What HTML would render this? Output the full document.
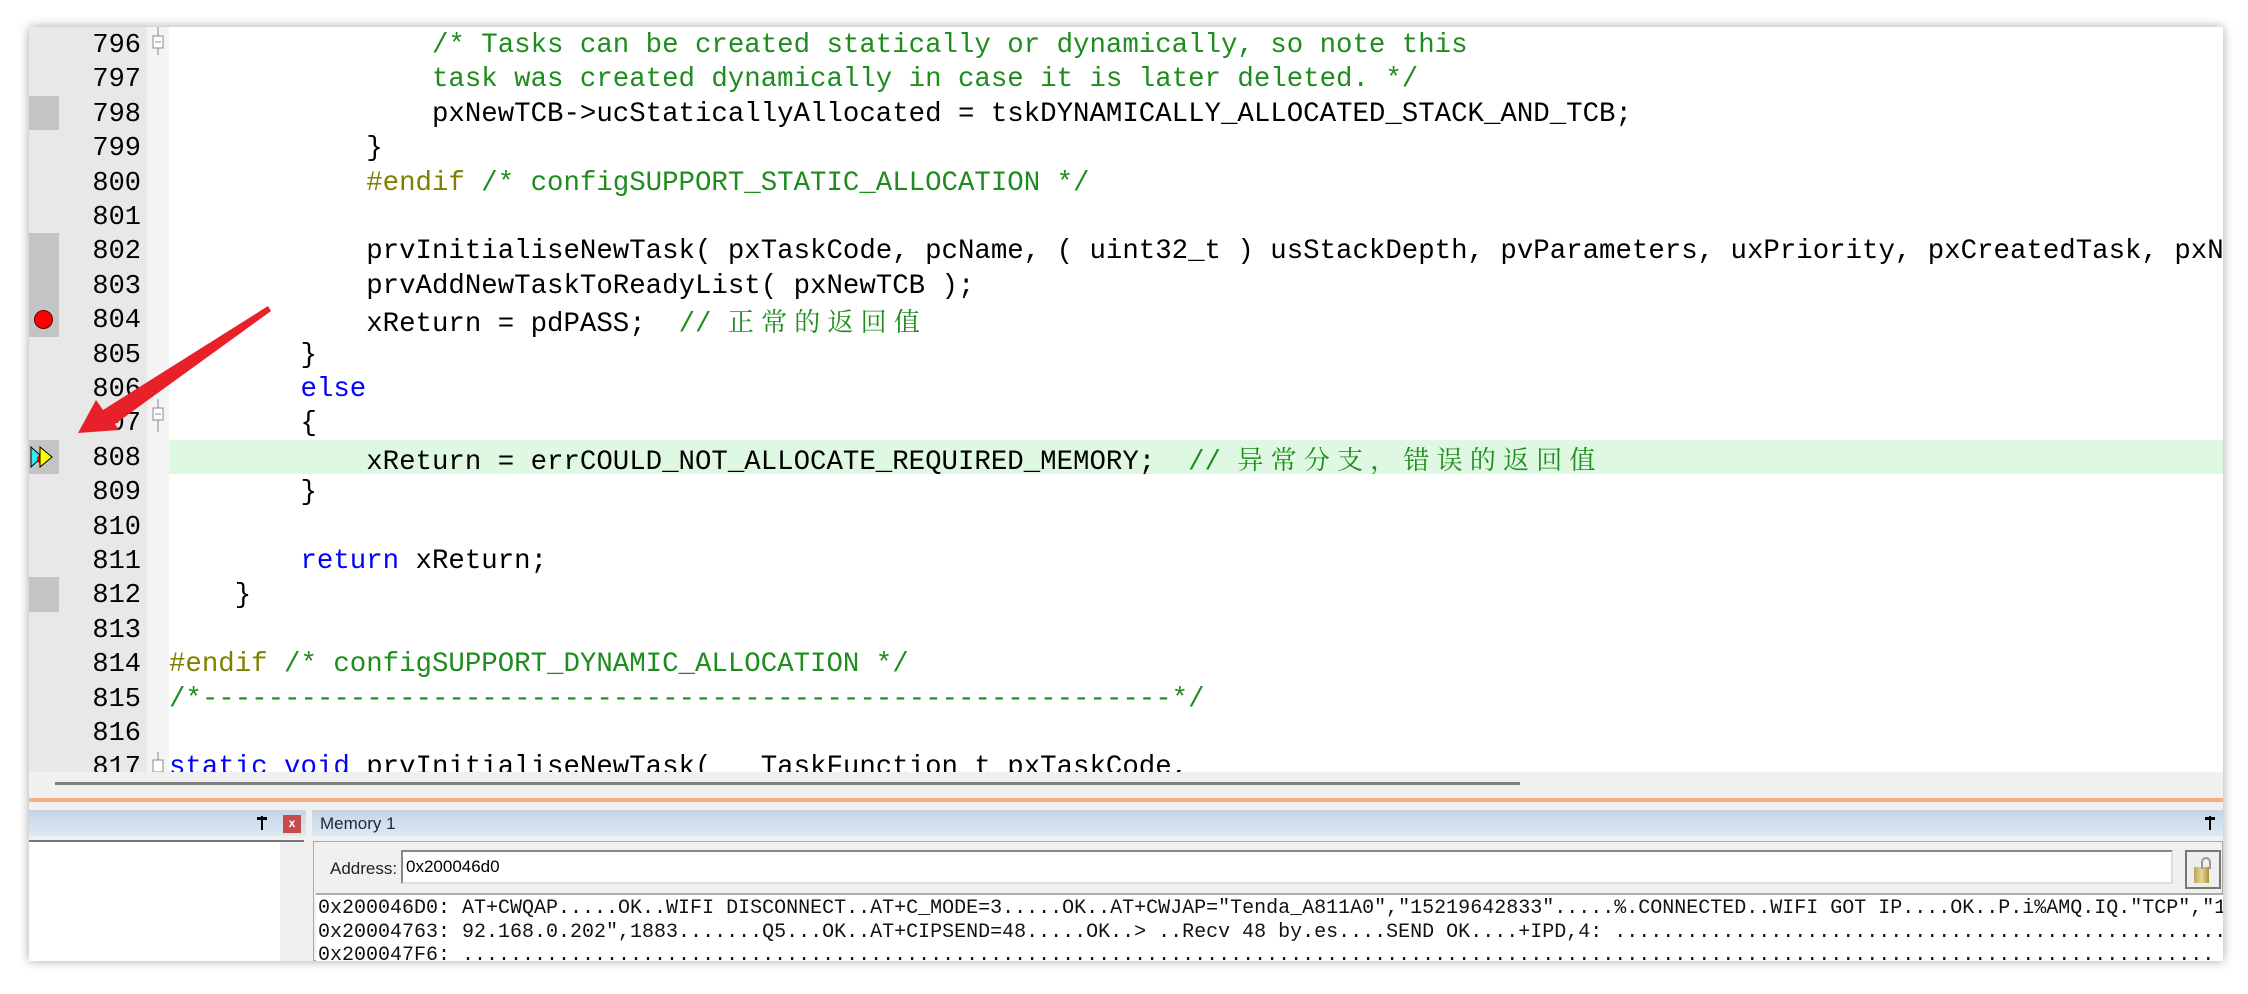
<!DOCTYPE html>
<html><head><meta charset="utf-8"><style>
*{margin:0;padding:0;box-sizing:border-box}
body{width:2248px;height:994px;background:#fff;position:relative;overflow:hidden;font-family:"Liberation Mono",monospace}
#win{position:absolute;left:29px;top:27px;width:2194px;height:934px;background:#fff;box-shadow:0 0 10px rgba(0,0,0,.35);overflow:hidden}
#in{position:absolute;left:-7px;top:0;width:2201px;height:934px}
#ed{position:absolute;left:0;top:0;width:2201px;height:745px;overflow:hidden;background:#fff}
.gut{position:absolute;left:7px;top:0;width:118px;height:745px;background:#e8e8e8}
.fold{position:absolute;left:125px;top:0;width:22px;height:745px;background:#f4f4f4}
.bp{position:absolute;left:7px;width:30px;height:34.4px;background:#c4c4c4}
.ln{position:absolute;left:40px;width:79px;text-align:right;font-size:27px;line-height:34.4px;color:#000;margin-top:2px}
.cl{position:absolute;left:147px;font-size:27.4px;line-height:34.4px;white-space:pre;color:#000;margin-top:2px}
.c{color:#1e8c1e}.k{color:#0000ff}.p{color:#808000}
.z{font-family:"Noto Serif CJK SC",serif;letter-spacing:7.2px;color:#1e8c1e;font-size:26px}
.hl{position:absolute;left:147px;width:2060px;height:34.4px;background:#dff8e2}
</style></head><body>
<div id="win"><div id="in">
<div id="ed">
<div class="gut"></div><div class="fold"></div>
<div class="bp" style="top:68.8px"></div>
<div class="bp" style="top:206.4px;height:103.2px"></div>
<div class="bp" style="top:412.8px"></div>
<div class="bp" style="top:550.4px"></div>
<div class="hl" style="top:412.8px"></div>
<div style="position:absolute;left:12px;top:283px;width:19px;height:19px;border-radius:50%;background:#f00;border:1px solid #600"></div>
<svg style="position:absolute;left:8px;top:418px" width="26" height="24"><polygon points="1,2 12,12 1,22" fill="#3ee" stroke="#000" stroke-width="1"/><circle cx="12" cy="14" r="5" fill="#e00"/><polygon points="10,2 22,12 10,22" fill="#ff0" stroke="#000" stroke-width="1"/></svg>
<svg style="position:absolute;left:126px;top:0" width="20" height="745"><g stroke="#888" fill="#fff"><line x1="10" y1="0" x2="10" y2="28"/><rect x="5" y="9" width="10" height="12"/><line x1="7" y1="15" x2="13" y2="15"/><line x1="10" y1="372" x2="10" y2="405"/><rect x="5" y="381" width="10" height="12"/><line x1="7" y1="387" x2="13" y2="387"/><line x1="10" y1="725" x2="10" y2="745"/><rect x="5" y="733" width="10" height="12"/></g></svg>
<div class="ln" style="top:0">796</div><div class="ln" style="top:34.4px">797</div><div class="ln" style="top:68.8px">798</div><div class="ln" style="top:103.2px">799</div><div class="ln" style="top:137.6px">800</div><div class="ln" style="top:172px">801</div><div class="ln" style="top:206.4px">802</div><div class="ln" style="top:240.8px">803</div><div class="ln" style="top:275.2px">804</div><div class="ln" style="top:309.6px">805</div><div class="ln" style="top:344px">806</div><div class="ln" style="top:378.4px">807</div><div class="ln" style="top:412.8px">808</div><div class="ln" style="top:447.2px">809</div><div class="ln" style="top:481.6px">810</div><div class="ln" style="top:516px">811</div><div class="ln" style="top:550.4px">812</div><div class="ln" style="top:584.8px">813</div><div class="ln" style="top:619.2px">814</div><div class="ln" style="top:653.6px">815</div><div class="ln" style="top:688px">816</div><div class="ln" style="top:722.4px">817</div>
<div class="cl" style="top:0"><span class="c">                /* Tasks can be created statically or dynamically, so note this</span></div>
<div class="cl" style="top:34.4px"><span class="c">                task was created dynamically in case it is later deleted. */</span></div>
<div class="cl" style="top:68.8px">                pxNewTCB-&gt;ucStaticallyAllocated = tskDYNAMICALLY_ALLOCATED_STACK_AND_TCB;</div>
<div class="cl" style="top:103.2px">            }</div>
<div class="cl" style="top:137.6px">            <span class="p">#endif</span><span class="c"> /* configSUPPORT_STATIC_ALLOCATION */</span></div>
<div class="cl" style="top:206.4px">            prvInitialiseNewTask( pxTaskCode, pcName, ( uint32_t ) usStackDepth, pvParameters, uxPriority, pxCreatedTask, pxNewTCB, NULL );</div>
<div class="cl" style="top:240.8px">            prvAddNewTaskToReadyList( pxNewTCB );</div>
<div class="cl" style="top:275.2px">            xReturn = pdPASS;  <span class="c">// </span><span class="z">正常的返回值</span></div>
<div class="cl" style="top:309.6px">        }</div>
<div class="cl" style="top:344px">        <span class="k">else</span></div>
<div class="cl" style="top:378.4px">        {</div>
<div class="cl" style="top:412.8px">            xReturn = errCOULD_NOT_ALLOCATE_REQUIRED_MEMORY;  <span class="c">// </span><span class="z">异常分支，错误的返回值</span></div>
<div class="cl" style="top:447.2px">        }</div>
<div class="cl" style="top:516px">        <span class="k">return</span> xReturn;</div>
<div class="cl" style="top:550.4px">    }</div>
<div class="cl" style="top:619.2px"><span class="p">#endif</span><span class="c"> /* configSUPPORT_DYNAMIC_ALLOCATION */</span></div>
<div class="cl" style="top:653.6px"><span class="c">/*-----------------------------------------------------------*/</span></div>
<div class="cl" style="top:722.4px"><span class="k">static void</span> prvInitialiseNewTask(   TaskFunction_t pxTaskCode,</div>
</div>
<div style="position:absolute;left:0;top:745px;width:2201px;height:26px;background:#f0f0f0"></div>
<div style="position:absolute;left:33px;top:755px;width:1465px;height:3px;background:#808080"></div>
<div style="position:absolute;left:0;top:771px;width:2201px;height:4px;background:#f5b084"></div>
<div style="position:absolute;left:0;top:775px;width:2201px;height:159px;background:#f0f0f0"></div>
<div style="position:absolute;left:0;top:783px;width:284px;height:26px;background:linear-gradient(#c5d5e6,#dde8f2)"></div>
<div style="position:absolute;left:290px;top:783px;width:1911px;height:26px;background:linear-gradient(#c5d5e6,#dde8f2)"></div>
<div style="position:absolute;left:239px;top:789px;width:2px;height:14px;background:#000"></div><div style="position:absolute;left:235px;top:790px;width:10px;height:3px;background:#000"></div>
<div style="position:absolute;left:2187px;top:789px;width:2px;height:14px;background:#000"></div><div style="position:absolute;left:2183px;top:790px;width:10px;height:3px;background:#000"></div>
<div style="position:absolute;left:261px;top:788px;width:18px;height:18px;background:#c94a4a;color:#fff;font:bold 12px 'Liberation Sans',sans-serif;text-align:center;line-height:17px">x</div>
<div style="position:absolute;left:298px;top:787px;font:17px 'Liberation Sans',sans-serif;color:#1a2a3a">Memory 1</div>
<div style="position:absolute;left:0;top:813px;width:282px;height:121px;background:#fff;border-top:2px solid #777"></div>
<div style="position:absolute;left:258px;top:815px;width:24px;height:119px;background:#f0f0f0"></div>
<div style="position:absolute;left:291px;top:814px;width:1910px;height:120px;border:1px solid #aaa;background:#f0f0f0"></div>
<div style="position:absolute;left:308px;top:832px;font:17px 'Liberation Sans',sans-serif;color:#222">Address:</div>
<div style="position:absolute;left:379px;top:823px;width:1772px;height:34px;background:#fff;border:2px solid #888;border-right-color:#ddd;border-bottom-color:#ddd;font:17px 'Liberation Sans',sans-serif;padding:5px 3px">0x200046d0</div>
<div style="position:absolute;left:2163px;top:823px;width:36px;height:39px;border:2px solid #777;background:#eee"></div>
<div style="position:absolute;left:2172px;top:840px;width:15px;height:16px;background:linear-gradient(90deg,#b8a55a,#e8d890,#a89040)"></div>
<div style="position:absolute;left:2179px;top:830px;width:10px;height:12px;border:2px solid #999;border-bottom:none;border-radius:5px 5px 0 0"></div>
<div style="position:absolute;left:294px;top:866px;width:1907px;height:68px;background:#fff;border-top:2px solid #aaa;overflow:hidden;font:20px/23.5px 'Liberation Mono',monospace;white-space:pre;padding:2px 0 0 2px;color:#111">0x200046D0: AT+CWQAP.....OK..WIFI DISCONNECT..AT+C_MODE=3.....OK..AT+CWJAP="Tenda_A811A0","15219642833".....%.CONNECTED..WIFI GOT IP....OK..P.i%AMQ.IQ."TCP","1
0x20004763: 92.168.0.202",1883.......Q5...OK..AT+CIPSEND=48.....OK..&gt; ..Recv 48 by.es....SEND OK....+IPD,4: ............................................................
0x200047F6: ..................................................................................................................................................</div>
</div></div>
<svg style="position:absolute;left:0;top:0" width="2248" height="994"><polygon points="271,311 115,424 119,430 78,433 96,400 103,410 268,306" fill="#e8202a"/></svg>
</body></html>
